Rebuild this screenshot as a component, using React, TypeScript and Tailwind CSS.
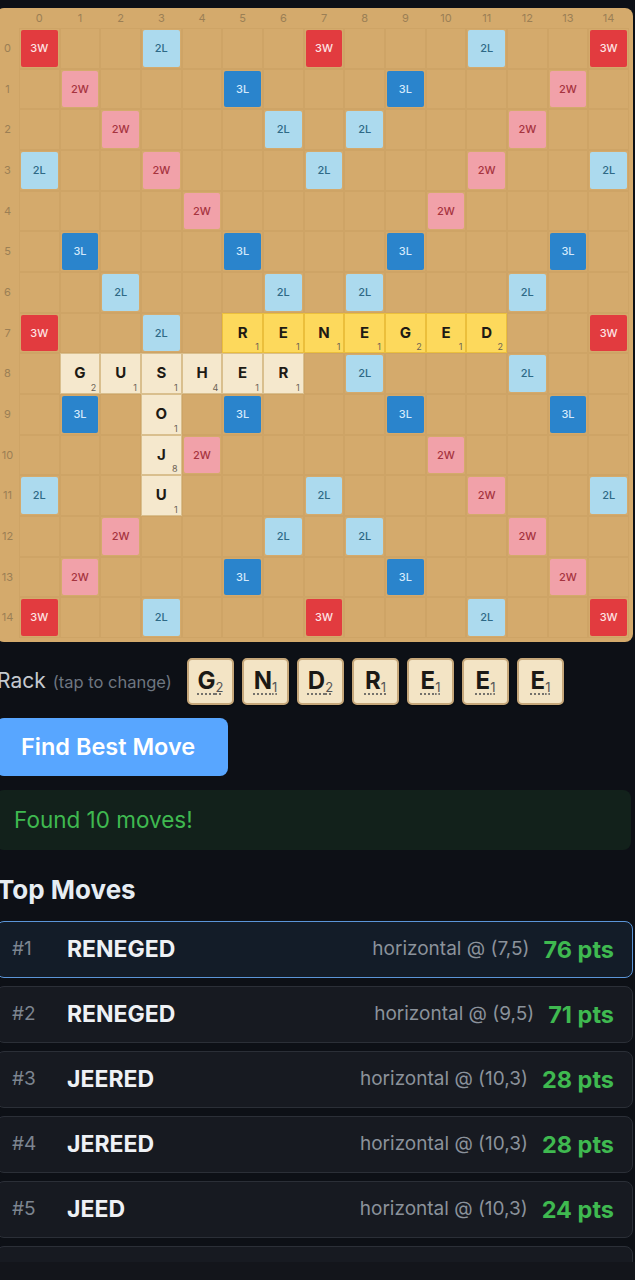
import React from "react";

type Bonus = "3W" | "2W" | "3L" | "2L";

const key = (r: number, c: number) => `${r},${c}`;

const BONUS: Record<string, Bonus> = {};
[[0, 0], [0, 7], [0, 14], [7, 0], [7, 14], [14, 0], [14, 7], [14, 14]].forEach(([r, c]) => (BONUS[key(r, c)] = "3W"));
[
  [1, 1], [2, 2], [3, 3], [4, 4], [1, 13], [2, 12], [3, 11], [4, 10],
  [10, 4], [11, 3], [12, 2], [13, 1], [10, 10], [11, 11], [12, 12], [13, 13], [7, 7],
].forEach(([r, c]) => (BONUS[key(r, c)] = "2W"));
[
  [1, 5], [1, 9], [5, 1], [5, 5], [5, 9], [5, 13], [9, 1], [9, 5], [9, 9], [9, 13], [13, 5], [13, 9],
].forEach(([r, c]) => (BONUS[key(r, c)] = "3L"));
[
  [0, 3], [0, 11], [2, 6], [2, 8], [3, 0], [3, 7], [3, 14], [6, 2], [6, 6], [6, 8], [6, 12],
  [7, 3], [7, 11], [8, 2], [8, 6], [8, 8], [8, 12], [11, 0], [11, 7], [11, 14], [12, 6], [12, 8],
  [14, 3], [14, 11],
].forEach(([r, c]) => (BONUS[key(r, c)] = "2L"));

type Placed = { letter: string; value: number; fresh?: boolean };
const PLACED: Record<string, Placed> = {};
// existing words
"GUSHER".split("").forEach((l, i) => {
  PLACED[key(8, 1 + i)] = { letter: l, value: [2, 1, 1, 4, 1, 1][i] };
});
[["O", 1], ["J", 8], ["U", 1]].forEach(([l, v], i) => {
  PLACED[key(9 + i, 3)] = { letter: l as string, value: v as number };
});
// suggested move
"RENEGED".split("").forEach((l, i) => {
  PLACED[key(7, 5 + i)] = { letter: l, value: [1, 1, 1, 1, 2, 1, 2][i], fresh: true };
});

const bonusStyle: Record<Bonus, string> = {
  "3W": "bg-[#e23b3f] text-[#fde3e3]",
  "2W": "bg-[#f1a1a9] text-[#a6343f]",
  "3L": "bg-[#2a84cc] text-[#d4e9fb]",
  "2L": "bg-[#acdaee] text-[#2e6986]",
};

const RACK: [string, number][] = [
  ["G", 2], ["N", 1], ["D", 2], ["R", 1], ["E", 1], ["E", 1], ["E", 1],
];

const MOVES = [
  { word: "RENEGED", pos: "(7,5)", pts: 76 },
  { word: "RENEGED", pos: "(9,5)", pts: 71 },
  { word: "JEERED", pos: "(10,3)", pts: 28 },
  { word: "JEREED", pos: "(10,3)", pts: 28 },
  { word: "JEED", pos: "(10,3)", pts: 24 },
  { word: "JEER", pos: "(10,3)", pts: 22 },
];

const Cell = ({ r, c }: { r: number; c: number }) => {
  const tile = PLACED[key(r, c)];
  const bonus = BONUS[key(r, c)];

  if (tile) {
    return (
      <div
        className={
          "relative aspect-square flex items-center justify-center border " +
          (tile.fresh
            ? "bg-[#fdd95c] border-[#ebbf3c]"
            : "bg-[#f5e8cd] border-[#d9bf8e]")
        }
      >
        <span className="text-[15px] font-bold text-[#1d1a14]">{tile.letter}</span>
        <span className="absolute right-[3px] bottom-[1px] text-[9px] leading-none text-[#6b6255]">
          {tile.value}
        </span>
      </div>
    );
  }

  return (
    <div className="aspect-square border border-[#c69a5e]/40 p-[1px]">
      {bonus && (
        <div
          className={
            "w-full h-full rounded-[2px] flex items-center justify-center text-[11px] font-medium " +
            bonusStyle[bonus]
          }
        >
          {bonus}
        </div>
      )}
    </div>
  );
};

const Board = () => {
  const idx = Array.from({ length: 15 }, (_, i) => i);
  return (
    <div className="mt-[8px] bg-[#d4aa6c] rounded-lg pr-[4px] pb-[4px]">
      <div className="grid grid-cols-[23px_repeat(15,minmax(0,1fr))]">
        <div className="h-[20px]" />
        {idx.map((c) => (
          <div key={c} className="h-[20px] flex items-center justify-center text-[11px] text-[#9b7f55]">
            {c}
          </div>
        ))}
        {idx.map((r) => (
          <React.Fragment key={r}>
            <div className="flex items-center justify-center text-[11px] text-[#9b7f55]">{r}</div>
            {idx.map((c) => (
              <Cell key={c} r={r} c={c} />
            ))}
          </React.Fragment>
        ))}
      </div>
    </div>
  );
};

const RackTile = ({ letter, value }: { letter: string; value: number }) => (
  <div className="w-[47px] h-[47px] rounded-[5px] bg-[#f3e4c5] border-2 border-[#c6a77a] shadow-[0_1px_2px_rgba(0,0,0,0.5)] flex items-center justify-center">
    <span className="underline decoration-dotted decoration-[#555] underline-offset-[5px] text-[#1b1915] leading-none">
      <span className="text-[24px] font-bold">{letter}</span>
      <sub className="text-[13px] text-[#555] bottom-[-3px]">{value}</sub>
    </span>
  </div>
);

export default function App() {
  return (
    <div
      className="h-[1280px] bg-[#0d1016] flex flex-col overflow-hidden"
      style={{ fontFamily: "Inter, 'Noto Sans', sans-serif" }}
    >
      <div className="flex-1 overflow-hidden">
        <div className="ml-[-4px] w-[637px]">
          <Board />

          {/* RACK */}
          <div className="mt-[15px] h-[48px] flex items-center">
            <div className="w-[191px] pl-[1px] whitespace-nowrap">
              <span className="text-[21px] text-[#c5c9cf]">Rack</span>
              <span className="text-[16.5px] text-[#6e7681] ml-[7px]">(tap to change)</span>
            </div>
            <div className="flex gap-[8px]">
              {RACK.map(([l, v], i) => (
                <RackTile key={i} letter={l} value={v} />
              ))}
            </div>
          </div>

          {/* BUTTON */}
          <button className="mt-[13px] h-[58px] w-[232px] pl-[25px] text-left rounded-lg bg-[#58a6ff] text-white text-[23.5px] font-semibold">
            Find Best Move
          </button>

          {/* STATUS */}
          <div className="mt-[14px] h-[60px] w-[635px] rounded-lg bg-[#12211b] flex items-center pl-[18px] text-[22.5px] text-[#3fb950]">
            Found 10 moves!
          </div>

          {/* MOVES */}
          <h2 className="mt-[24px] text-[26px] leading-[32px] font-bold text-[#e6edf3] pl-[1px]">Top Moves</h2>
          <div className="mt-[15px] flex flex-col gap-[8px]">
            {MOVES.map((m, i) => (
              <div
                key={i}
                className={
                  "h-[57px] rounded-lg border flex items-center pl-[15px] pr-[18px] " +
                  (i === 0
                    ? "bg-[#131c28] border-[#5b95d8] border-[1.5px]"
                    : "bg-[#171a21] border-[#2b2f37]")
                }
              >
                <span className="w-[55px] text-[19px] text-[#7d8590]">#{i + 1}</span>
                <span className="text-[23px] font-bold text-[#eef1f5]">{m.word}</span>
                <span className="ml-auto text-[19px] text-[#8b929b]">horizontal @ {m.pos}</span>
                <span className="ml-[14px] text-[23.5px] font-bold text-[#3fb950]">{m.pts} pts</span>
              </div>
            ))}
          </div>
        </div>
      </div>
      <div className="h-[18px] bg-[#13151b]" />
    </div>
  );
}
